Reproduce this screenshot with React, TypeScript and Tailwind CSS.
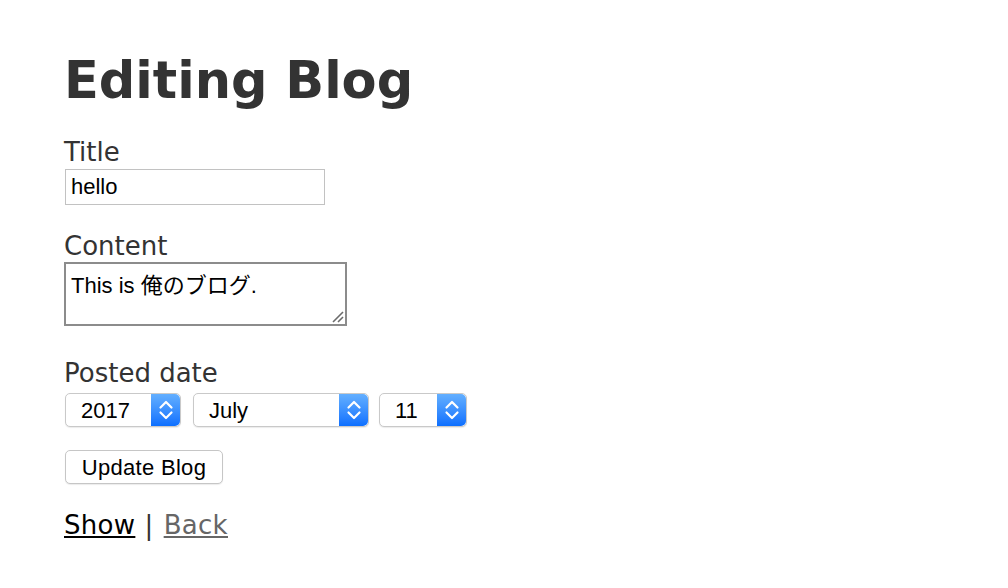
import React from "react";

const sans = "font-['DejaVu_Sans',Verdana,sans-serif]";
const field = "font-['Liberation_Sans','Noto_Sans_CJK_JP',Arial,sans-serif]";

// macOS風の上下矢印ボタン
const Stepper = () => (
  <div className="flex justify-center items-center w-[29px] h-full rounded-r-[5px] bg-gradient-to-b from-[#63afff] to-[#0b6fff]">
    <svg width="16" height="26" viewBox="0 0 16 26" fill="none" stroke="white" strokeWidth="2.2" strokeLinecap="round" strokeLinejoin="round">
      <path d="M2.5 10.5 L8 5 L13.5 10.5" />
      <path d="M2.5 15.5 L8 21 L13.5 15.5" />
    </svg>
  </div>
);

const FakeSelect = ({ value, width }: { value: string; width: string }) => (
  <div
    className={`flex items-stretch h-[34px] ${width} bg-white rounded-[5px] border border-[#c9c9c9] shadow-[0_1px_1px_rgba(0,0,0,0.08)]`}
  >
    <span className={`flex-1 flex items-center pl-[15px] text-[22px] text-black ${field}`}>
      {value}
    </span>
    <Stepper />
  </div>
);

export default function App() {
  return (
    <div className={`min-h-screen bg-white px-[64px] pt-[56px] text-[#333] ${sans}`}>
      <h1 className="h-[50px] text-[51px] leading-[50px] font-bold">Editing Blog</h1>

      <form className="flex flex-col items-start" onSubmit={(e) => e.preventDefault()}>
        <label className="block mt-[32px] text-[26px] leading-[28px]">Title</label>
        <input
          defaultValue="hello"
          className={`mt-[3px] ml-[1px] w-[260px] h-[36px] px-[5px] border border-[#c2c2c2] text-[22px] text-black outline-none ${field}`}
        />

        <label className="block mt-[27px] text-[26px] leading-[28px]">Content</label>
        <div className="relative mt-[2px]">
          <textarea
            defaultValue="This is 俺のブログ."
            className={`block w-[283px] h-[64px] border-2 border-[#8c8c8c] pl-[5px] pt-[9px] text-[22px] leading-[26px] text-black resize-none outline-none ${field}`}
          />
          <svg className="absolute right-[3px] bottom-[3px]" width="13" height="13" viewBox="0 0 13 13" stroke="#6b6b6b" strokeWidth="1.6">
            <path d="M2 12 L12 2" />
            <path d="M7 12 L12 7" />
          </svg>
        </div>

        <label className="block mt-[33px] text-[26px] leading-[28px]">Posted date</label>
        <div className="flex mt-[6px] ml-[1px]">
          <FakeSelect value="2017" width="w-[116px]" />
          <div className="ml-[12px]">
            <FakeSelect value="July" width="w-[176px]" />
          </div>
          <div className="ml-[10px]">
            <FakeSelect value="11" width="w-[88px]" />
          </div>
        </div>

        <button
          type="submit"
          className={`mt-[23px] ml-[1px] h-[34px] w-[158px] bg-white rounded-[5px] border border-[#c6c6c6] shadow-[0_1px_1px_rgba(0,0,0,0.08)] text-[22px] tracking-[0.3px] text-black ${field}`}
        >
          Update Blog
        </button>
      </form>

      <div className="mt-[27px] text-[26px] leading-[28px] tracking-[0.3px]">
        <a href="#" className="text-black underline">Show</a>
        <span className="tracking-[1px]"> | </span>
        <a href="#" className="text-[#666] underline">Back</a>
      </div>
    </div>
  );
}
